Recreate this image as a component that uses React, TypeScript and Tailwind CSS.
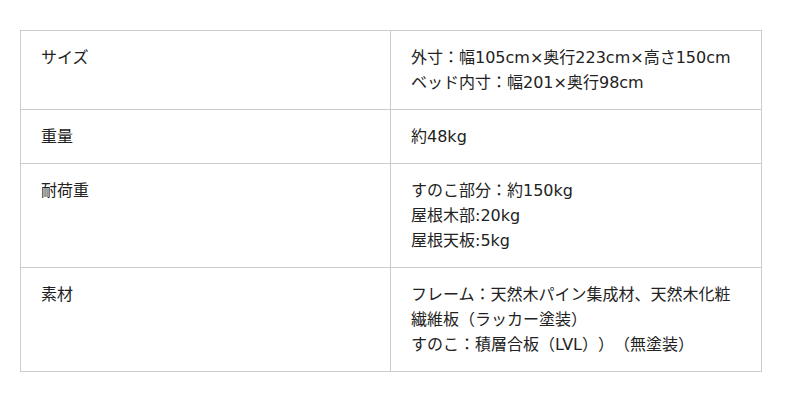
import React from "react";

interface SpecRow {
    label: string;
    lines: string[];
}

const rows: SpecRow[] = [
    {
        label: "サイズ",
        lines: ["外寸：幅105cm×奥行223cm×高さ150cm", "ベッド内寸：幅201×奥行98cm"],
    },
    { label: "重量", lines: ["約48kg"] },
    {
        label: "耐荷重",
        lines: ["すのこ部分：約150kg", "屋根木部:20kg", "屋根天板:5kg"],
    },
    {
        label: "素材",
        lines: [
            "フレーム：天然木パイン集成材、天然木化粧繊維板（ラッカー塗装）",
            "すのこ：積層合板（LVL））（無塗装）",
        ],
    },
];

const App: React.FC = () => {
    return (
        <div className="w-[800px] h-[402px] bg-white pt-[30px] pl-[20px] font-['DejaVu_Sans','Noto_Sans_CJK_JP',sans-serif] text-[16px] leading-[25px] text-[#222] [text-spacing-trim:space-all]">
            <table className="w-[742px] table-fixed border-collapse">
                <tbody>
                    {rows.map((row) => (
                        <tr key={row.label}>
                            <th className="w-[370px] border border-[#cccccc] px-[20px] py-[14px] text-left align-top font-normal">
                                {row.label}
                            </th>
                            <td className="border border-[#cccccc] px-[20px] py-[14px] align-top">
                                {row.lines.map((line) => (
                                    <p key={line}>{line}</p>
                                ))}
                            </td>
                        </tr>
                    ))}
                </tbody>
            </table>
        </div>
    );
};

export default App;
